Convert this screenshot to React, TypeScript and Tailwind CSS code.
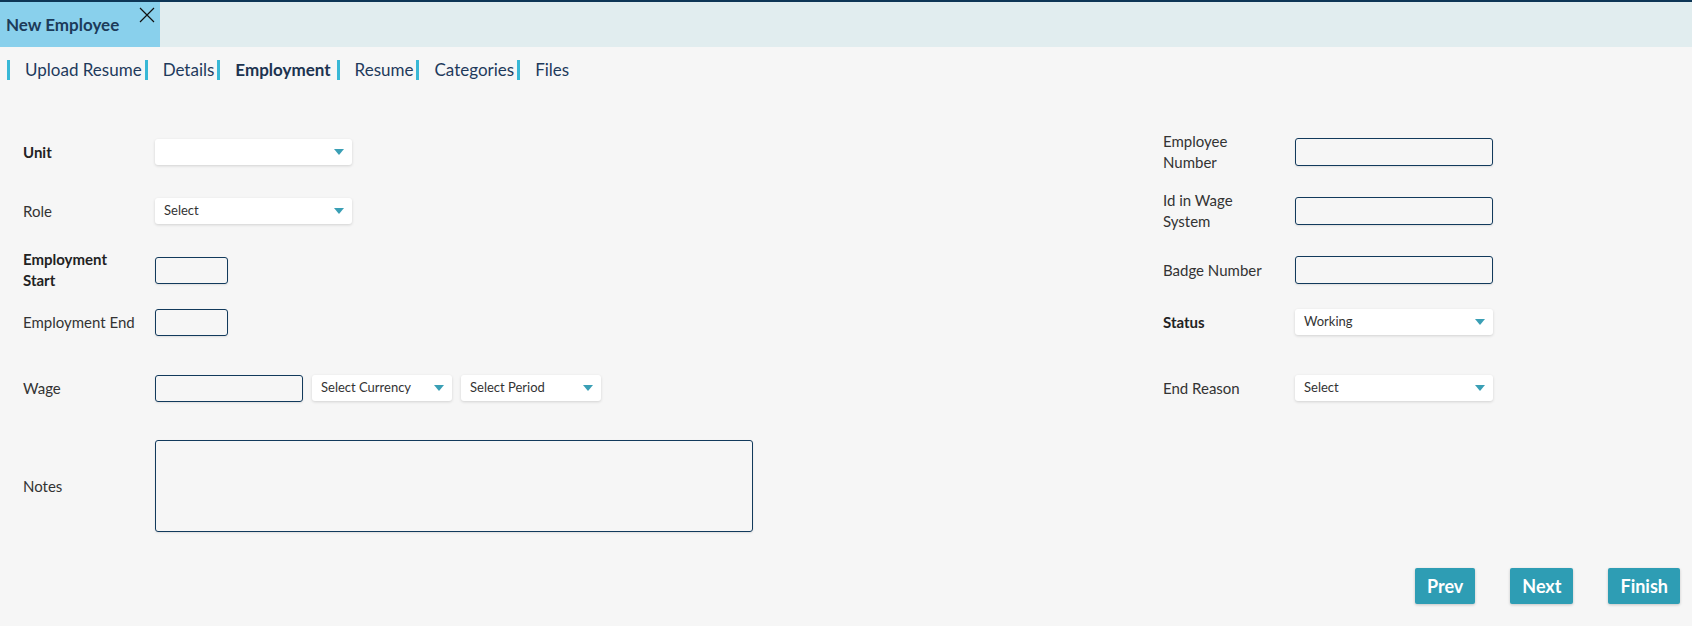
import React from 'react'

const font = { fontFamily: '"Source Sans Pro", Lato, "Open Sans", sans-serif' }

function Caret() {
  return (
    <svg width="10" height="6" viewBox="0 0 10 6" className="shrink-0">
      <path d="M0 0h10L5 6z" fill="#3a9fb5" />
    </svg>
  )
}

function Dropdown({ value, width }: { value?: string; width: string }) {
  return (
    <div className={`${width} h-[26px] bg-white rounded-[3px] shadow-[0_1px_3px_rgba(0,0,0,0.15)] flex items-center justify-between pl-[9px] pr-[8px] text-[13px] text-[#333]`}>
      <span>{value}</span>
      <Caret />
    </div>
  )
}

function TextBox({ width, height = 'h-[27px]' }: { width: string; height?: string }) {
  return <div className={`${width} ${height} border border-[#123a5c] rounded-[3px] shadow-[0_1px_2px_rgba(0,0,0,0.1)]`} />
}

function Row({ label, bold, mt, h = 'h-[52px]', children }: { label: React.ReactNode; bold?: boolean; mt: string; h?: string; children: React.ReactNode }) {
  return (
    <div className={`flex items-center ${h} ${mt}`}>
      <div className={`w-[132px] text-[15px] leading-[21px] ${bold ? 'font-bold text-[#222]' : 'text-[#333]'}`}>{label}</div>
      <div className="flex items-center gap-[9px]">{children}</div>
    </div>
  )
}

const tabs = ['Upload Resume', 'Details', 'Employment', 'Resume', 'Categories', 'Files']

export default function App() {
  return (
    <div className="w-[1692px] h-[626px] bg-[#f6f6f6] flex flex-col overflow-hidden" style={font}>
      <div className="h-[2px] bg-[#0d3656]" />
      <div className="h-[45px] bg-[#e1edef] flex">
        <div className="w-[160px] bg-[#89d0ec] relative flex items-end pb-[10px] pl-[6px]">
          <span className="text-[17px] font-bold text-[#1c3b5a]">New Employee</span>
          <svg className="absolute right-[5px] top-[5px]" width="16" height="16" viewBox="0 0 16 16">
            <path d="M1 1L15 15M15 1L1 15" stroke="#111" strokeWidth="1.2" />
          </svg>
        </div>
      </div>

      {/* step tabs */}
      <div className="flex items-center mt-[13px] pl-[7px] h-[20px]">
        <div className="w-[3px] h-[20px] bg-[#38b8d6]" />
        {tabs.map((t, i) => (
          <div key={t} className="flex items-center h-[20px]">
            <span className={`text-[17px] leading-[20px] pl-[15px] pr-[3px] ${t === 'Employment' ? 'font-bold text-[#1c3350] pr-[6px]' : 'text-[#1e3a5c]'}`}>{t}</span>
            {i < tabs.length - 1 && <div className="w-[3px] h-[20px] bg-[#38b8d6]" />}
          </div>
        ))}
      </div>

      <div className="flex pl-[23px]">
        <div className="w-[1140px] flex flex-col">
          <Row label="Unit" bold mt="mt-[46px]">
            <Dropdown width="w-[197px]" />
          </Row>
          <Row label="Role" mt="mt-[7px]">
            <Dropdown width="w-[197px]" value="Select" />
          </Row>
          <Row label={<>Employment<br />Start</>} bold mt="mt-[7px]">
            <TextBox width="w-[73px]" />
          </Row>
          <Row label="Employment End" mt="mt-0">
            <TextBox width="w-[73px]" />
          </Row>
          <Row label="Wage" mt="mt-[14px]">
            <TextBox width="w-[148px]" />
            <Dropdown width="w-[140px]" value="Select Currency" />
            <Dropdown width="w-[140px]" value="Select Period" />
          </Row>
          <Row label="Notes" mt="mt-[26px]" h="h-[92px]">
            <TextBox width="w-[598px]" height="h-[92px]" />
          </Row>
        </div>

        <div className="flex flex-col">
          <Row label={<>Employee<br />Number</>} mt="mt-[46px]">
            <TextBox width="w-[198px]" height="h-[28px]" />
          </Row>
          <Row label={<>Id in Wage<br />System</>} mt="mt-[7px]">
            <TextBox width="w-[198px]" height="h-[28px]" />
          </Row>
          <Row label="Badge Number" mt="mt-[7px]">
            <TextBox width="w-[198px]" height="h-[28px]" />
          </Row>
          <Row label="Status" bold mt="mt-0">
            <Dropdown width="w-[198px]" value="Working" />
          </Row>
          <Row label="End Reason" mt="mt-[14px]">
            <Dropdown width="w-[198px]" value="Select" />
          </Row>
        </div>
      </div>

      <div className="flex justify-end gap-[35px] pr-[12px] mt-auto mb-[22px]">
        {['Prev', 'Next', 'Finish'].map((b) => (
          <button key={b} className="h-[36px] px-[12px] min-w-[59px] bg-[#2e9db4] text-white font-bold text-[18px] rounded-[2px] shadow-[0_1px_3px_rgba(0,0,0,0.2)]">
            {b}
          </button>
        ))}
      </div>
    </div>
  )
}
